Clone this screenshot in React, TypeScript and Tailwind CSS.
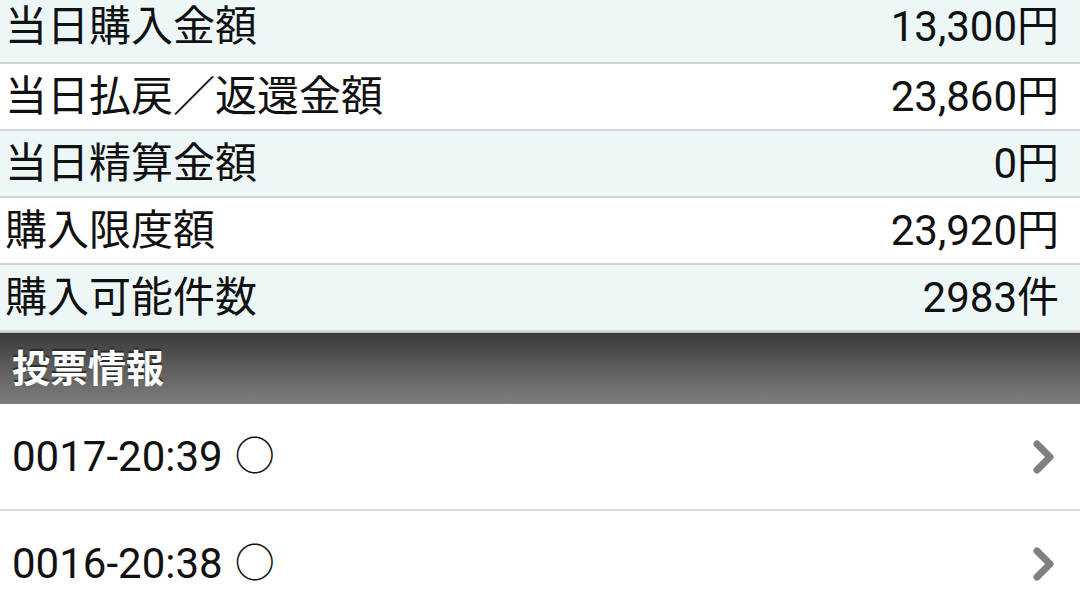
const font = { fontFamily: 'Roboto, "Noto Sans CJK JP", sans-serif' };

type Row = { label: string; value: string; tint: boolean };

const rows: Row[] = [
  { label: '当日購入金額', value: '13,300円', tint: true },
  { label: '当日払戻／返還金額', value: '23,860円', tint: false },
  { label: '当日精算金額', value: '0円', tint: true },
  { label: '購入限度額', value: '23,920円', tint: false },
  { label: '購入可能件数', value: '2983件', tint: true },
];

const votes = ['0017-20:39', '0016-20:38'];

function Chevron() {
  return (
    <svg width="26" height="38" viewBox="0 0 26 38" className="shrink-0">
      <polyline
        points="6,6 19,19 6,32"
        fill="none"
        stroke="#808080"
        strokeWidth="7"
        strokeLinecap="round"
        strokeLinejoin="round"
      />
    </svg>
  );
}

export default function App() {
  return (
    <div className="w-[1080px] h-[614px] overflow-hidden bg-white text-[#111]" style={font}>
      {/* ── Summary rows ───────────────────────────── */}
      {rows.map((r, i) => (
        <div
          key={r.label}
          className={`flex items-center justify-between pl-[5px] pr-[21px] border-b-2 border-[#d4d4d4] text-[42px] leading-none ${
            r.tint ? 'bg-[#eef7f7]' : 'bg-white'
          } ${i === 0 ? 'h-[64px] pb-[8px]' : 'h-[67px]'}`}
        >
          <span>{r.label}</span>
          <span>{r.value}</span>
        </div>
      ))}

      {/* ── Section header ─────────────────────────── */}
      <div className="h-[72px] flex items-center pl-[12px] border-t border-[#c4c4c4] bg-gradient-to-b from-[#3a3a3a] via-[#5e5e5e] to-[#7e7e7e]">
        <span
          className="text-white font-bold text-[38px] leading-none"
          style={{ textShadow: '0 -2px 1px #2a2a2a' }}
        >
          投票情報
        </span>
      </div>

      {/* ── Vote list ──────────────────────────────── */}
      {votes.map((v) => (
        <div
          key={v}
          className="h-[107px] flex items-center justify-between pl-[12px] pr-[23px] border-b-2 border-[#d8d8d8] bg-white"
        >
          <span className="text-[42px] leading-none flex items-center gap-[12px]">
            <span>{v}</span>
            <span className="text-[40px]">○</span>
          </span>
          <Chevron />
        </div>
      ))}
    </div>
  );
}
